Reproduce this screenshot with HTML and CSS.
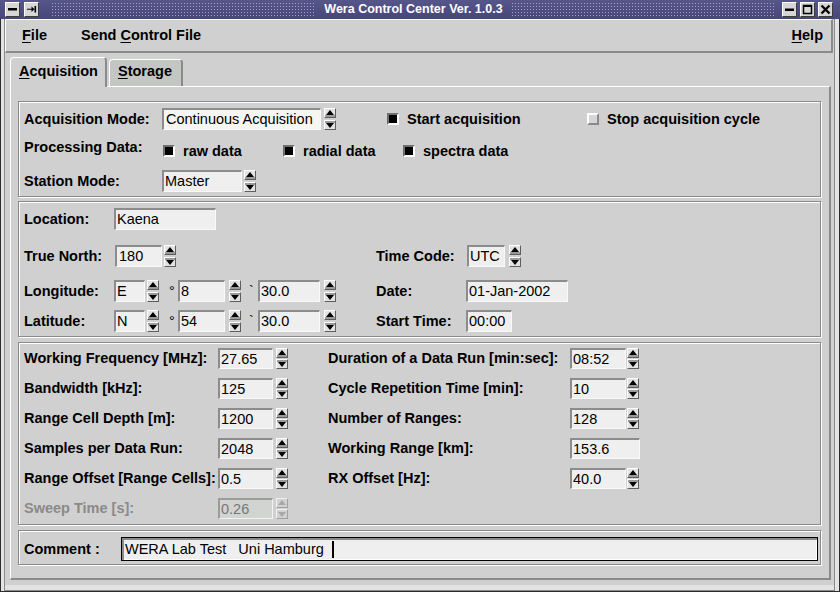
FILE: index.html
```
<!DOCTYPE html>
<html>
<head>
<meta charset="utf-8">
<title>Wera Control Center</title>
<link rel="stylesheet" href="styles.css">
</head>
<body>
<div class="window">
  <div class="titlebar">
    <span class="tbtn"><svg viewBox="0 0 13 13"><rect x="2" y="5" width="9" height="2.5"/></svg></span>
    <span class="tbtn tbtn-pin"><svg viewBox="0 0 13 13"><path d="M2 5.75h4.5V3.5l3 2.75-3 2.75V6.75H2z"/><rect x="9.5" y="3" width="1.6" height="6.5"/></svg></span>
    <span class="dots dots-left"></span>
    <span class="title">Wera Control Center Ver. 1.0.3</span>
    <span class="dots"></span>
    <span class="tbtns-right">
      <span class="tbtn"><svg viewBox="0 0 13 13"><rect x="2" y="5.5" width="9" height="2.5"/></svg></span>
      <span class="tbtn"><svg viewBox="0 0 13 13"><rect x="2.5" y="2.5" width="8" height="8" fill="none" stroke="#000" stroke-width="1.5"/><rect x="2" y="2" width="9" height="2"/></svg></span>
      <span class="tbtn"><svg viewBox="0 0 13 13"><path d="M2.5 2.5l8 8M10.5 2.5l-8 8" stroke="#000" stroke-width="2.3"/></svg></span>
    </span>
  </div>

  <div class="client">
    <div class="menubar">
      <span class="menu"><u>F</u>ile</span>
      <span class="menu menu-send">Send <u>C</u>ontrol File</span>
      <span class="menu menu-help"><u>H</u>elp</span>
    </div>

    <div class="tabs">
      <div class="tab tab-active"><u>A</u>cquisition</div>
      <div class="tab tab-inactive"><u>S</u>torage</div>
    </div>

    <div class="panel">
      <div class="group g1">
        <div class="row">
          <span class="lbl l-s1">Acquisition Mode:</span>
          <span class="field f-acq">Continuous Acquisition</span>
          <span class="spin sp3"><i class="up"></i><i class="dn"></i></span>
          <span class="chk chk-start"><i class="box"></i>Start acquisition</span>
          <span class="chk"><i class="box box-off"></i>Stop acquisition cycle</span>
        </div>
        <div class="row">
          <span class="lbl l-s1 l-proc">Processing Data:</span>
          <span class="checks">
            <span class="chk chk-data"><i class="box"></i>raw data</span>
            <span class="chk chk-data"><i class="box"></i>radial data</span>
            <span class="chk chk-data"><i class="box"></i>spectra data</span>
          </span>
        </div>
        <div class="row">
          <span class="lbl l-s1">Station Mode:</span>
          <span class="field f-station">Master</span>
          <span class="spin sp2"><i class="up"></i><i class="dn"></i></span>
        </div>
      </div>

      <div class="group g2">
        <div class="row">
          <span class="lbl l-90">Location:</span>
          <span class="field f-loc">Kaena</span>
        </div>
        <div class="row r-tn">
          <span class="left2">
            <span class="lbl l-91">True North:</span>
            <span class="field f-tn">180</span>
            <span class="spin sp2"><i class="up"></i><i class="dn"></i></span>
          </span>
          <span class="lbl l-91">Time Code:</span>
          <span class="field f-tc">UTC</span>
          <span class="spin sp4"><i class="up"></i><i class="dn"></i></span>
        </div>
        <div class="row r-lon">
          <span class="left2">
            <span class="lbl l-90">Longitude:</span>
            <span class="field f-dir">E</span>
            <span class="spin sp2"><i class="up"></i><i class="dn"></i></span>
            <span class="sym sym-deg">°</span>
            <span class="field f-deg">8</span>
            <span class="spin sp4"><i class="up"></i><i class="dn"></i></span>
            <span class="sym sym-tick">`</span>
            <span class="field f-min">30.0</span>
            <span class="spin sp4"><i class="up"></i><i class="dn"></i></span>
          </span>
          <span class="lbl l-90">Date:</span>
          <span class="field f-date">01-Jan-2002</span>
        </div>
        <div class="row r-lat">
          <span class="left2">
            <span class="lbl l-90">Latitude:</span>
            <span class="field f-dir">N</span>
            <span class="spin sp2"><i class="up"></i><i class="dn"></i></span>
            <span class="sym sym-deg">°</span>
            <span class="field f-deg">54</span>
            <span class="spin sp4"><i class="up"></i><i class="dn"></i></span>
            <span class="sym sym-tick">`</span>
            <span class="field f-min">30.0</span>
            <span class="spin sp4"><i class="up"></i><i class="dn"></i></span>
          </span>
          <span class="lbl l-90">Start Time:</span>
          <span class="field f-time">00:00</span>
        </div>
      </div>

      <div class="group g3">
        <div class="row">
          <span class="left3">
            <span class="lbl l-194">Working Frequency [MHz]:</span>
            <span class="field f-num">27.65</span>
            <span class="spin sp3"><i class="up"></i><i class="dn"></i></span>
          </span>
          <span class="lbl l-242">Duration of a Data Run [min:sec]:</span>
          <span class="field f-num2">08:52</span>
          <span class="spin sp1"><i class="up"></i><i class="dn"></i></span>
        </div>
        <div class="row">
          <span class="left3">
            <span class="lbl l-194">Bandwidth [kHz]:</span>
            <span class="field f-num">125</span>
            <span class="spin sp3"><i class="up"></i><i class="dn"></i></span>
          </span>
          <span class="lbl l-242">Cycle Repetition Time [min]:</span>
          <span class="field f-num2">10</span>
          <span class="spin sp1"><i class="up"></i><i class="dn"></i></span>
        </div>
        <div class="row">
          <span class="left3">
            <span class="lbl l-194">Range Cell Depth [m]:</span>
            <span class="field f-num">1200</span>
            <span class="spin sp3"><i class="up"></i><i class="dn"></i></span>
          </span>
          <span class="lbl l-242">Number of Ranges:</span>
          <span class="field f-num2">128</span>
          <span class="spin sp1"><i class="up"></i><i class="dn"></i></span>
        </div>
        <div class="row">
          <span class="left3">
            <span class="lbl l-194">Samples per Data Run:</span>
            <span class="field f-num">2048</span>
            <span class="spin sp3"><i class="up"></i><i class="dn"></i></span>
          </span>
          <span class="lbl l-242">Working Range [km]:</span>
          <span class="field f-wr">153.6</span>
        </div>
        <div class="row">
          <span class="left3">
            <span class="lbl l-194">Range Offset [Range Cells]:</span>
            <span class="field f-num">0.5</span>
            <span class="spin sp3"><i class="up"></i><i class="dn"></i></span>
          </span>
          <span class="lbl l-242">RX Offset [Hz]:</span>
          <span class="field f-num2">40.0</span>
          <span class="spin sp1"><i class="up"></i><i class="dn"></i></span>
        </div>
        <div class="row">
          <span class="left3">
            <span class="lbl l-194 lbl-dis">Sweep Time [s]:</span>
            <span class="field f-num field-dis">0.26</span>
            <span class="spin sp3 spin-dis"><i class="up"></i><i class="dn"></i></span>
          </span>
        </div>
      </div>

      <div class="group g4">
        <div class="row r-comment">
          <span class="lbl l-97">Comment :</span>
          <span class="comment"><span class="ctext">WERA Lab Test   Uni Hamburg</span><i class="caret"></i></span>
        </div>
      </div>
    </div>
  </div>
</div>
</body>
</html>
```

FILE: styles.css
```
* { box-sizing: border-box; }
html, body { margin: 0; padding: 0; }
body {
  width: 840px;
  height: 592px;
  overflow: hidden;
  background: #d0d0d0;
  font-family: "Liberation Sans", Arial, sans-serif;
  font-size: 14.5px;
  line-height: 17px;
  color: #000;
}
u { text-decoration: underline; text-underline-offset: 2px; }

.window {
  width: 840px;
  height: 592px;
  display: flex;
  flex-direction: column;
  background: #d0d0d0;
}

/* ---------- title bar ---------- */
.titlebar {
  flex: none;
  height: 19px;
  display: flex;
  align-items: center;
  padding-left: 5px;
  background: linear-gradient(#56568a, #46467a);
}
.tbtn {
  flex: none;
  width: 15px;
  height: 15px;
  display: flex;
  align-items: center;
  justify-content: center;
  background: #d6d6d6;
  border: 1px solid;
  border-color: #fff #3c3c3c #3c3c3c #fff;
}
.tbtn svg { width: 13px; height: 13px; display: block; }
.tbtn-pin { margin-left: 4px; }
.dots {
  flex: none;
  width: 263px;
  height: 14px;
  background-image: conic-gradient(at 1px 1px, transparent 75%, #a2a2cc 0);
  background-size: 3px 3px;
}
.dots-left { margin-left: 13px; }
.title {
  flex: none;
  width: 197px;
  text-align: center;
  color: #fff;
  font-weight: bold;
  font-size: 12.5px;
  white-space: nowrap;
}
.tbtns-right { flex: none; margin-left: 7px; display: flex; gap: 3px; }

/* ---------- client ---------- */
.client {
  flex: 1;
  display: flex;
  flex-direction: column;
  border: 1px solid #2c2c2c;
  border-top: none;
  padding: 0 6px 0 4px;
  box-shadow: inset 3px 0 0 #e4e4e4, inset 4px 0 0 #8a8a8a,
              inset -4px 0 0 #e4e4e4, inset -5px 0 0 #8a8a8a,
              inset 0 -1px 0 #8a8a8a, inset 0 -6px 0 #e2e2e2;
}

.menubar {
  flex: none;
  height: 34px;
  display: flex;
  align-items: center;
  padding: 0 8px 0 16px;
  border-style: solid;
  border-width: 1px 2px 2px 1px;
  border-color: #fff #8a8a8a #8a8a8a #fff;
  font-weight: bold;
}
.menu { flex: none; }
.menu-send { margin-left: 34px; }
.menu-help { margin-left: auto; }

.tabs {
  flex: none;
  height: 34px;
  margin-bottom: -1px;
  padding-left: 5px;
  display: flex;
  align-items: flex-end;
}
.tab {
  flex: none;
  font-weight: bold;
  padding-left: 8px;
  border-style: solid;
  border-width: 1px 2px 0 1px;
  border-color: #fff #8a8a8a #8a8a8a #fff;
  border-radius: 4px 4px 0 0;
}
.tab-active {
  width: 97px;
  height: 30px;
  padding-top: 5px;
  background: #d0d0d0;
  position: relative;
  z-index: 1;
}
.tab-inactive {
  width: 74px;
  height: 27px;
  padding-top: 3px;
  margin: 0 0 1px 2px;
  background: #c3c6c3;
}

.panel {
  flex: none;
  height: 494px;
  margin: 0 2px 0 5px;
  padding: 14px 8px 0 7px;
  border-style: solid;
  border-width: 1px 2px 2px 1px;
  border-color: #fff #8a8a8a #8a8a8a #fff;
}

/* ---------- groups ---------- */
.group {
  border: 1px solid #8a8a8a;
  box-shadow: inset 1px 1px 0 #fff, 1px 1px 0 #fff;
  padding: 0 5px;
}
.g1 { height: 96px; padding-top: 6px; }
.g2 { height: 136px; margin-top: 4px; padding-top: 6px; }
.g3 { height: 183px; margin-top: 5px; padding-top: 5px; }
.g4 { height: 35px; margin-top: 5px; padding: 6px 2px 0 5px; }

.row {
  display: flex;
  align-items: center;
  height: 22px;
  white-space: nowrap;
}
.g1 .row + .row { margin-top: 9px; }
.r-tn { margin-top: 15px; }
.r-lon { margin-top: 13px; }
.r-lat { margin-top: 8px; }
.g3 .row { height: 21px; }
.g3 .row + .row { margin-top: 9px; }
.r-comment { height: 24px; }

.lbl { flex: none; font-weight: bold; }
.l-s1 { width: 138px; }
.l-90 { width: 90px; }
.l-91 { width: 91px; }
.l-97 { width: 97px; }
.l-194 { width: 194px; }
.l-242 { width: 242px; }
.l-proc { margin-bottom: 5px; }
.lbl-dis { color: #8a8a8a; }

.left2 { flex: none; width: 352px; display: flex; align-items: center; }
.left3 { flex: none; width: 304px; display: flex; align-items: center; }

/* ---------- text fields ---------- */
.field {
  flex: none;
  height: 22px;
  display: flex;
  align-items: center;
  padding-left: 1px;
  background: #efefef;
  border-style: solid;
  border-width: 2px 1px 1px 2px;
  border-color: #8c8c8c #fafafa #fafafa #8c8c8c;
  overflow: hidden;
}
.g3 .field { height: 21px; }
.f-acq { width: 159px; background: #f5f5f2; padding-left: 2px; }
.f-station { width: 80px; }
.f-loc { width: 102px; }
.f-tn { width: 47px; padding-left: 2px; }
.f-tc { width: 38px; }
.f-dir { width: 31px; }
.f-deg { width: 47px; }
.f-min { width: 62px; }
.f-date { width: 102px; }
.f-time { width: 46px; }
.f-num { width: 55px; }
.f-num2 { width: 56px; }
.f-wr { width: 70px; }
.field-dis {
  background: #d2d4d1;
  color: #767676;
  border-color: #9c9c9c #f2f2f2 #f2f2f2 #9c9c9c;
}

.sym { flex: none; }
.sym-deg { width: 19px; padding-left: 10px; }
.sym-tick { width: 17px; padding-left: 8px; }

/* ---------- spin buttons ---------- */
.spin {
  flex: none;
  width: 12px;
  height: 22px;
  display: flex;
  flex-direction: column;
  justify-content: space-between;
}
.g3 .spin { height: 21px; }
.sp1 { margin-left: 1px; }
.sp2 { margin-left: 2px; }
.sp3 { margin-left: 3px; }
.sp4 { margin-left: 4px; }
.spin i {
  height: 10px;
  display: flex;
  align-items: center;
  justify-content: center;
  background: #e2e2e2;
  border: 1px solid;
  border-color: #fff #5e5e5e #5e5e5e #fff;
}
.spin i::after {
  content: "";
  width: 0;
  height: 0;
  border-left: 4px solid transparent;
  border-right: 4px solid transparent;
}
.spin .up { align-items: flex-start; padding-top: 1px; box-shadow: inset 0 -2px 0 #9a9a9a; }
.spin .dn { align-items: flex-end; padding-bottom: 1px; box-shadow: inset 0 2px 0 #9a9a9a; }
.spin .up::after { border-bottom: 5px solid #000; }
.spin .dn::after { border-top: 5px solid #000; }
.spin-dis i { background: #d2d2d2; border-color: #f0f0f0 #a0a0a0 #a0a0a0 #f0f0f0; }
.spin-dis .up, .spin-dis .dn { box-shadow: none; }
.spin-dis .up::after { border-bottom-color: #a8a8a8; }
.spin-dis .dn::after { border-top-color: #a8a8a8; }

/* ---------- check boxes ---------- */
.chk { flex: none; display: flex; align-items: center; font-weight: bold; }
.box {
  flex: none;
  width: 12px;
  height: 12px;
  margin-right: 8px;
  background: #000;
  border: 2px solid;
  border-color: #6e6e6e #fff #fff #6e6e6e;
}
.box-off { background: #d6d6d6; border-color: #fff #8a8a8a #8a8a8a #fff; }
.chk-start { margin-left: 51px; width: 200px; }
.checks { flex: none; display: flex; margin: 2px 0 0 1px; }
.chk-data { width: 120px; }

/* ---------- comment ---------- */
.comment {
  flex: 1;
  height: 24px;
  display: flex;
  align-items: center;
  padding-left: 3px;
  background: #efefef;
  border: 1px solid #000;
  box-shadow: inset 2px 2px 0 #8a8a8a, inset -1px -1px 0 #fff;
}
.ctext { white-space: pre; }
.caret { flex: none; width: 2px; height: 17px; background: #000; margin-left: 8px; }
```
